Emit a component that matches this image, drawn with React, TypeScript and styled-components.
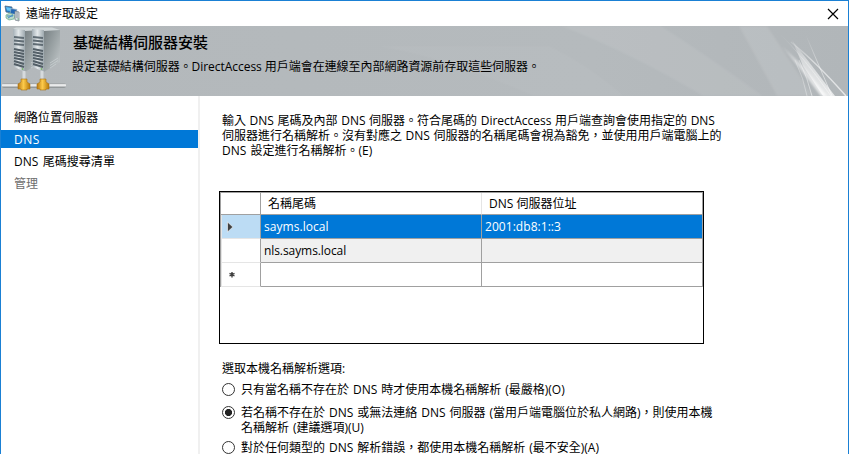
import React from "react";
import styled, { createGlobalStyle } from "styled-components";

const Global = createGlobalStyle`
  * { box-sizing: border-box; }
  html, body { margin: 0; padding: 0; overflow: hidden; background: #fff; }
  body { font: 12px/15px "Open Sans", "Noto Sans CJK TC", sans-serif; color: #000; }
`;

const Window = styled.div`
  width: 849px;
  height: 454px;
  overflow: hidden;
  display: flex;
  flex-direction: column;
  background: #fff;
  border: 1px solid #1a80d4;
  border-bottom: 0;
`;

const TitleBar = styled.header`
  flex: 0 0 25px;
  display: flex;
  align-items: center;
  padding: 0 9px 0 3px;
  gap: 5px;
  svg { display: block; }
`;

const WindowTitle = styled.span`
  flex: 1;
`;

const CloseButton = styled.button`
  border: 0;
  padding: 0;
  background: none;
  width: 12px;
  height: 12px;
`;

const Banner = styled.section`
  flex: 0 0 70px;
  position: relative;
  display: flex;
  overflow: hidden;
  background: #b4b9bc;
`;

const BannerArt = styled.svg`
  position: absolute;
  inset: 0;
`;

const ServerArt = styled.svg`
  position: relative;
  flex: 0 0 71px;
  height: 70px;
`;

const BannerText = styled.div`
  position: relative;
  display: flex;
  flex-direction: column;
  padding-top: 7px;
  gap: 7px;
`;

const Heading = styled.h1`
  margin: 0;
  font-size: 15px;
  line-height: 19px;
  font-weight: 500;
  padding-left: 1px;
`;

const Line = styled.div<{ $word?: number; $letter?: number }>`
  white-space: nowrap;
  height: 15px;
  line-height: 15px;
  word-spacing: ${(p) => p.$word ?? 0}px;
  letter-spacing: ${(p) => p.$letter ?? 0}px;
`;

const Body = styled.div`
  flex: 1;
  min-height: 0;
  display: flex;
`;

const Sidebar = styled.nav`
  flex: 0 0 199px;
  border-right: 2px solid #f0f0f0;
  padding-top: 12px;
  display: flex;
  flex-direction: column;
  gap: 4px;
`;

const NavItem = styled.a<{ $state?: "active" | "muted" }>`
  height: 18px;
  line-height: 18px;
  padding: 1px 0 0 13px;
  word-spacing: 1px;
  letter-spacing: ${(p) => (p.$state === "active" ? 0.5 : 0.05)}px;
  background: ${(p) => (p.$state === "active" ? "#0078d7" : "transparent")};
  color: ${(p) => (p.$state === "active" ? "#fff" : p.$state === "muted" ? "#6d6d6d" : "#000")};
`;

const Content = styled.main`
  flex: 1;
  padding: 17px 0 0 19px;
`;

const Intro = styled.div`
  padding-left: 3px;
`;

const GridFrame = styled.div`
  margin: 33px 0 17px;
  width: 485px;
  height: 153px;
  border: 1px solid #000;
`;

const Grid = styled.div`
  display: grid;
  grid-template-columns: 40px 221px 221px;
  grid-template-rows: 22px repeat(3, 24px);
  border: 1px solid #a0a0a0;
  border-width: 1px 0 0 1px;
  width: 483px;
`;

const ColumnHead = styled.div`
  border-right: 1px solid #e5e5e5;
  border-bottom: 1px solid #a0a0a0;
  padding-left: 7px;
  line-height: 22px;
  &:nth-child(1) { border-right-color: #a0a0a0; }
  &:nth-child(3) { border-right-color: #a0a0a0; }
`;

const RowHead = styled.div<{ $current?: boolean }>`
  border-right: 1px solid #a0a0a0;
  border-bottom: 1px solid #e5e5e5;
  border-left: 1px solid #e5e5e5;
  padding-left: 4px;
  display: flex;
  align-items: center;
  background: ${(p) => (p.$current ? "#bcdcf4" : "#fff")};
`;

const Cell = styled.div<{ $tone?: "selected" | "alt" }>`
  border-right: 1px solid #a0a0a0;
  border-bottom: 1px solid #a0a0a0;
  padding-left: 3px;
  line-height: 23px;
  background: ${(p) => (p.$tone === "selected" ? "#0078d7" : p.$tone === "alt" ? "#f0f0f0" : "#fff")};
  color: ${(p) => (p.$tone === "selected" ? "#fff" : "#000")};
  letter-spacing: ${(p) => (p.$tone === "selected" ? 0.05 : -0.08)}px;
`;

const OptionsTitle = styled.div`
  padding-left: 3px;
  margin-bottom: 6px;
`;

const Option = styled.label<{ $gap?: number }>`
  display: flex;
  gap: 6px;
  padding-left: 3px;
  margin-bottom: ${(p) => p.$gap ?? 0}px;
`;

const Radio = styled.span<{ $checked?: boolean }>`
  flex: 0 0 13px;
  height: 13px;
  margin-top: 1px;
  border-radius: 50%;
  border: 1px solid #333;
  background: ${(p) => (p.$checked ? "radial-gradient(circle, #222 0 3.2px, #fff 3.9px)" : "#fff")};
`;

const AppIcon = () => (
  <svg width="17" height="17" viewBox="0 0 17 17">
    <path d="M1 1l7 1v6L2 7z" fill="#237ac5" stroke="#536d88" strokeWidth=".8" />
    <path d="M2 2l5 1v3L3 5.500z" fill="#62c4f7" />
    <path d="M7 3.500l6 1-1 5-6-1z" fill="#2468b4" stroke="#9db4c6" strokeWidth=".7" />
    <path d="M2 10l4-2 5 3-1 3-5 1-3-2z" fill="#b9d9c9" stroke="#68a98b" strokeWidth=".7" />
    <path d="M3 11h6M4 13l5-3" stroke="#438dc5" />
    <path d="M11 6l4 1v9l-4-1z" fill="#d9e1e6" stroke="#77828b" strokeWidth=".8" />
    <path d="M12 8h2M12 10h2M12 12h2" stroke="#6d7a83" strokeWidth=".8" />
    <path d="M13.500 14h1" stroke="#3ca949" />
  </svg>
);

const Tower = ({ x }: { x: number }) => (
  <g transform={`translate(${x} 0)`}>
    <path d="M12 4L28 4V36L12 46Z" fill="url(#side)" />
    <path d="M0 3L3 1.500H20L28 4L12 5Z" fill="#d0d6d8" />
    <path d="M0 3L12 4V46L1 41Z" fill="url(#front)" />
    <path d="M1 11l10 1M1 14.500l10 1M1 18l10 1" stroke="#606c74" strokeWidth="2" />
    <path d="M1 23l10 2M1 26l10 2M1 29l10 2M1 32l10 2M1 35l10 3M1 38l10 3" stroke="#535f67" strokeWidth="2.200" />
    <path d="M18 37l8-5M18 39.500l8-5M18 42l6-4" stroke="#c9cfd2" strokeWidth=".8" />
    <circle cx="9.500" cy="43" r=".8" fill="#62b34b" />
  </g>
);

const Servers = () => (
  <ServerArt width="71" height="70" viewBox="0 0 71 70">
    <defs>
      <linearGradient id="side" x2="1" y2="1">
        <stop stopColor="#788184" />
        <stop offset=".5" stopColor="#9ea6a8" />
        <stop offset="1" stopColor="#c6cbcd" />
      </linearGradient>
      <linearGradient id="front">
        <stop stopColor="#a5b0b7" />
        <stop offset=".45" stopColor="#e3e8ea" />
        <stop offset="1" stopColor="#9da8ae" />
      </linearGradient>
      <linearGradient id="pipe" x2="0" y2="1">
        <stop stopColor="#878d90" />
        <stop offset=".4" stopColor="#fff" />
        <stop offset="1" stopColor="#7d8386" />
      </linearGradient>
      <linearGradient id="gold">
        <stop stopColor="#b97a12" />
        <stop offset=".45" stopColor="#fdcb4b" />
        <stop offset="1" stopColor="#b87908" />
      </linearGradient>
    </defs>
    <Tower x={12} />
    <Tower x={31} />
    <path d="M23 45v9M41 45v9" stroke="#d6dadd" strokeWidth="3" />
    <rect x="1" y="57" width="64" height="5" rx="2" fill="url(#pipe)" />
    {[17, 36].map((x) => (
      <path key={x} transform={`translate(${x} 53)`} d="M3 0h6v3l3 2v5H9v1H3v-1H0V5l3-2z" fill="url(#gold)" stroke="#a87318" strokeWidth=".6" />
    ))}
  </ServerArt>
);

const Rays = () => (
  <BannerArt width="847" height="70" viewBox="0 0 847 70">
    <defs>
      <linearGradient id="bg" x2="1">
        <stop stopColor="#b3b8bb" />
        <stop offset=".7" stopColor="#b5babd" />
        <stop offset="1" stopColor="#b1b6b9" />
      </linearGradient>
      <linearGradient id="glow" gradientUnits="userSpaceOnUse" x1="0" y1="8" x2="0" y2="70">
        <stop stopColor="#fff" stopOpacity="0" />
        <stop offset=".45" stopColor="#fff" stopOpacity=".5" />
        <stop offset="1" stopColor="#fff" stopOpacity=".7" />
      </linearGradient>
      <filter id="soft" x="-20%" width="140%" colorInterpolationFilters="sRGB"><feGaussianBlur stdDeviation=".9" /></filter>
      <filter id="fine" x="-20%" width="140%" colorInterpolationFilters="sRGB"><feGaussianBlur stdDeviation=".4" /></filter>
    </defs>
    <rect width="847" height="70" fill="url(#bg)" />
    <g fill="#fff" filter="url(#soft)">
      <path d="M560 0h100q50 32 102 70h-60Q630 27 560 0" opacity=".07" />
      <path d="M738 0h28L812 70h-36z" opacity=".1" />
      <path d="M548 20q38 18 75 50h-90q-100-43-160-50z" opacity=".04" />
    </g>
    <path d="M791 14L808 36L834 70H822L802 40z" fill="url(#glow)" filter="url(#fine)" />
    <path d="M781 20L802 40L826 70H820L800 44z" fill="url(#glow)" filter="url(#soft)" />
    <g fill="none" stroke="url(#glow)" filter="url(#fine)">
      <path d="M790 16Q815 36 845 70" strokeWidth="1.500" />
      <path d="M802 2Q812 26 831 70" strokeWidth=".8" />
      <path d="M778 7Q802 30 830 70" strokeWidth=".6" />
      <path d="M798 34Q807 53 811 70" strokeWidth=".7" />
      <path d="M794 34Q803 53 806 70" strokeWidth=".5" />
    </g>
  </BannerArt>
);

const options = [
  { lines: ["只有當名稱不存在於 DNS 時才使用本機名稱解析 (最嚴格)(O)"], gap: 8 },
  {
    lines: ["若名稱不存在於 DNS 或無法連絡 DNS 伺服器 (當用戶端電腦位於私人網路)，則使用本機", "名稱解析 (建議選項)(U)"],
    gap: 5,
    checked: true,
  },
  { lines: ["對於任何類型的 DNS 解析錯誤，都使用本機名稱解析 (最不安全)(A)"], gap: 0 },
];

export default function App() {
  return (
    <>
      <Global />
      <Window>
        <TitleBar>
          <AppIcon />
          <WindowTitle>遠端存取設定</WindowTitle>
          <CloseButton aria-label="關閉">
            <svg width="12" height="12" viewBox="0 0 12 12">
              <path d="M1 1l10 10M11 1L1 11" stroke="#000" strokeWidth="1.200" />
            </svg>
          </CloseButton>
        </TitleBar>
        <Banner>
          <Rays />
          <Servers />
          <BannerText>
            <Heading>基礎結構伺服器安裝</Heading>
            <Line $letter={-0.04}>設定基礎結構伺服器。DirectAccess 用戶端會在連線至內部網路資源前存取這些伺服器。</Line>
          </BannerText>
        </Banner>
        <Body>
          <Sidebar>
            <NavItem>網路位置伺服器</NavItem>
            <NavItem $state="active">DNS</NavItem>
            <NavItem>DNS 尾碼搜尋清單</NavItem>
            <NavItem $state="muted">管理</NavItem>
          </Sidebar>
          <Content>
            <Intro>
              <Line $word={0.5}>輸入 DNS 尾碼及內部 DNS 伺服器。符合尾碼的 DirectAccess 用戶端查詢會使用指定的 DNS</Line>
              <Line $word={0.5}>伺服器進行名稱解析。沒有對應之 DNS 伺服器的名稱尾碼會視為豁免，並使用用戶端電腦上的</Line>
              <Line $word={1}>DNS 設定進行名稱解析。(E)</Line>
            </Intro>
            <GridFrame>
              <Grid>
                <ColumnHead />
                <ColumnHead>名稱尾碼</ColumnHead>
                <ColumnHead>DNS 伺服器位址</ColumnHead>
                <RowHead $current>
                  <svg width="8" height="12" viewBox="0 0 8 12">
                    <path d="M1.500 1v10L6.800 6z" fill="#404040" stroke="#fff" strokeWidth=".6" />
                  </svg>
                </RowHead>
                <Cell $tone="selected">sayms.local</Cell>
                <Cell $tone="selected">2001:db8:1::3</Cell>
                <RowHead />
                <Cell $tone="alt">nls.sayms.local</Cell>
                <Cell $tone="alt" />
                <RowHead>
                  <svg width="12" height="9" viewBox="0 0 12 9">
                    <path d="M6 2v5.500M3.500 3.300l5 2.700M8.500 3.300l-5 2.700" stroke="#404040" strokeWidth="1.400" />
                  </svg>
                </RowHead>
                <Cell />
                <Cell />
              </Grid>
            </GridFrame>
            <OptionsTitle><Line>選取本機名稱解析選項:</Line></OptionsTitle>
            {options.map((o) => (
              <Option key={o.lines[0]} $gap={o.gap}>
                <Radio $checked={o.checked} />
                <div>
                  {o.lines.map((l) => <Line key={l} $word={0.85}>{l}</Line>)}
                </div>
              </Option>
            ))}
          </Content>
        </Body>
      </Window>
    </>
  );
}
